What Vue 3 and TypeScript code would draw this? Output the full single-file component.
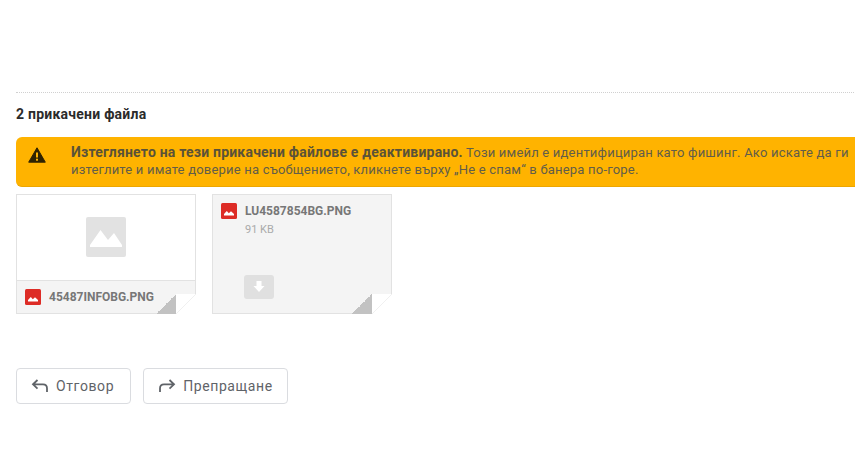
<script setup lang="ts">
interface Attachment {
  name: string;
  size?: string;
}

const preview: Attachment = { name: '45487INFOBG.PNG' };
const plain: Attachment = { name: 'LU4587854BG.PNG', size: '91 KB' };
</script>

<template>
  <div class="mail">
    <div class="attachments">
      <div class="count">2 прикачени файла</div>
      <div class="warning">
        <svg class="warn-icon" width="18" height="16" viewBox="0 0 18 16">
          <path d="M9 0.8 L17.3 15.2 H0.7 Z" fill="#2f2300" stroke="#2f2300" stroke-width="1" stroke-linejoin="round" />
          <rect x="8" y="5.5" width="2" height="5" fill="#ffb300" />
          <rect x="8" y="11.7" width="2" height="2" fill="#ffb300" />
        </svg>
        <div class="warning-text">
          <b>Изтеглянето на тези прикачени файлове е деактивирано.</b>
          Този имейл е идентифициран като фишинг. Ако искате да ги<br>
          изтеглите и имате доверие на съобщението, кликнете върху „Не е спам“ в банера по-горе.
        </div>
      </div>
      <div class="cards">
        <div class="card">
          <div class="thumb">
            <div class="thumb-box">
              <svg width="40" height="40" viewBox="0 0 40 40">
                <path d="M4 30 V28 L14.5 13 L22 23 L28 16 L36 28 V30 Z" fill="#fff" />
              </svg>
            </div>
          </div>
          <div class="foot">
            <svg class="file-icon" width="16" height="16" viewBox="0 0 16 16">
              <rect width="16" height="16" rx="1.5" fill="#dd2c26" />
              <path d="M3 12.5 V11 L5.8 8 L7.8 10.2 L10 8.2 L13 11 V12.5 Z" fill="#fff" />
            </svg>
            <span class="name">{{ preview.name }}</span>
          </div>
          <div class="fold"></div>
        </div>
        <div class="card card-plain">
          <div class="head">
            <svg class="file-icon" width="16" height="16" viewBox="0 0 16 16">
              <rect width="16" height="16" rx="1.5" fill="#dd2c26" />
              <path d="M3 12.5 V11 L5.8 8 L7.8 10.2 L10 8.2 L13 11 V12.5 Z" fill="#fff" />
            </svg>
            <div>
              <div class="name">{{ plain.name }}</div>
              <div class="size">{{ plain.size }}</div>
            </div>
          </div>
          <div class="download">
            <svg width="14" height="14" viewBox="0 0 14 14">
              <path d="M4.5 1 H9.5 V6 H12.5 L7 12 L1.5 6 H4.5 Z" fill="#fff" />
            </svg>
          </div>
          <div class="fold"></div>
        </div>
      </div>
    </div>
    <div class="actions">
      <button class="action" type="button">
        <svg width="18" height="18" viewBox="0 0 18 18" fill="none" stroke="#5f6368" stroke-width="1.8">
          <path d="M6.5 3 L2 7.3 L6.5 11.6 M2.5 7.3 H12 Q16 7.3 16 11.3 V15" />
        </svg>
        Отговор
      </button>
      <button class="action" type="button">
        <svg width="18" height="18" viewBox="0 0 18 18" fill="none" stroke="#5f6368" stroke-width="1.8">
          <path d="M11.5 3 L16 7.3 L11.5 11.6 M15.5 7.3 H6 Q2 7.3 2 11.3 V15" />
        </svg>
        Препращане
      </button>
    </div>
  </div>
</template>

<style scoped>
.mail {
  width: 855px;
  height: 456px;
  overflow: hidden;
  padding: 92px 0 0 16px;
  box-sizing: border-box;
  font-family: Roboto, "Liberation Sans", sans-serif;
  background: #fff;
}

.attachments {
  border-top: 1px dotted #d0d0d0;
  width: 860px;
}

.count {
  margin-top: 13px;
  height: 16px;
  line-height: 16px;
  font-size: 14px;
  font-weight: 700;
  letter-spacing: 0.24px;
  color: #2b2b2b;
}

.warning {
  margin-top: 15px;
  display: flex;
  height: 50px;
  box-sizing: border-box;
  background: #ffb300;
  border-radius: 6px 0 0 6px;
  border-bottom: 1px solid #eda600;
}

.warn-icon {
  margin: 10px 0 0 12px;
}

.warning-text {
  margin-left: 25px;
  padding-top: 7px;
  font-size: 13px;
  line-height: 17px;
  letter-spacing: 0.2px;
  color: #625d4a;
  white-space: nowrap;
}

.warning-text b {
  font-size: 14px;
  letter-spacing: 0.2px;
  color: #5a5238;
}

.cards {
  display: flex;
  gap: 16px;
  margin-top: 7px;
}

.card {
  position: relative;
  width: 180px;
  height: 120px;
  box-sizing: border-box;
  border: 1px solid #e2e2e2;
  background: #fff;
  display: flex;
  flex-direction: column;
}

.thumb {
  height: 85px;
  display: flex;
  align-items: center;
  justify-content: center;
}

.thumb-box {
  width: 40px;
  height: 40px;
  background: #e2e2e2;
  border-radius: 2px;
  margin-bottom: 1px;
}

.thumb-box svg {
  display: block;
}

.foot {
  flex: 1;
  background: #f4f4f4;
  border-top: 1px solid #e2e2e2;
  display: flex;
  align-items: center;
  padding-left: 8px;
  gap: 8px;
}

.file-icon {
  flex: none;
}

.name {
  font-size: 12px;
  font-weight: 700;
  color: #777;
  line-height: 16px;
}

.card-plain {
  background: #f4f4f4;
}

.head {
  display: flex;
  gap: 8px;
  padding: 8px 0 0 8px;
}

.size {
  margin-top: 3px;
  font-size: 11px;
  line-height: 16px;
  color: #aaa;
}

.download {
  width: 30px;
  height: 24px;
  margin: 37px 0 0 31px;
  background: #e0e0e0;
  border-radius: 3px;
  display: flex;
  align-items: center;
  justify-content: center;
}

.fold {
  position: absolute;
  right: -1px;
  bottom: -1px;
  width: 40px;
  height: 20px;
  background:
    linear-gradient(135deg, #fff 0 49%, #f0f0f0 49% 51%, #fff 51%) right bottom / 20px 20px no-repeat,
    linear-gradient(135deg, transparent 0 50%, #c2c2c2 50%) left bottom / 20px 20px no-repeat;
}

.actions {
  display: flex;
  gap: 12px;
  margin-top: 54px;
}

.action {
  height: 36px;
  box-sizing: border-box;
  display: flex;
  align-items: center;
  gap: 7px;
  padding: 0 15px 0 14px;
  background: #fff;
  border: 1px solid #dadce0;
  border-radius: 4px;
  font-family: Roboto, sans-serif;
  font-size: 14px;
  font-weight: 400;
  letter-spacing: 0.6px;
  color: #5f6368;
}

.action:first-child {
  padding-right: 16px;
}

.action:last-child {
  padding-right: 14px;
}
</style>
